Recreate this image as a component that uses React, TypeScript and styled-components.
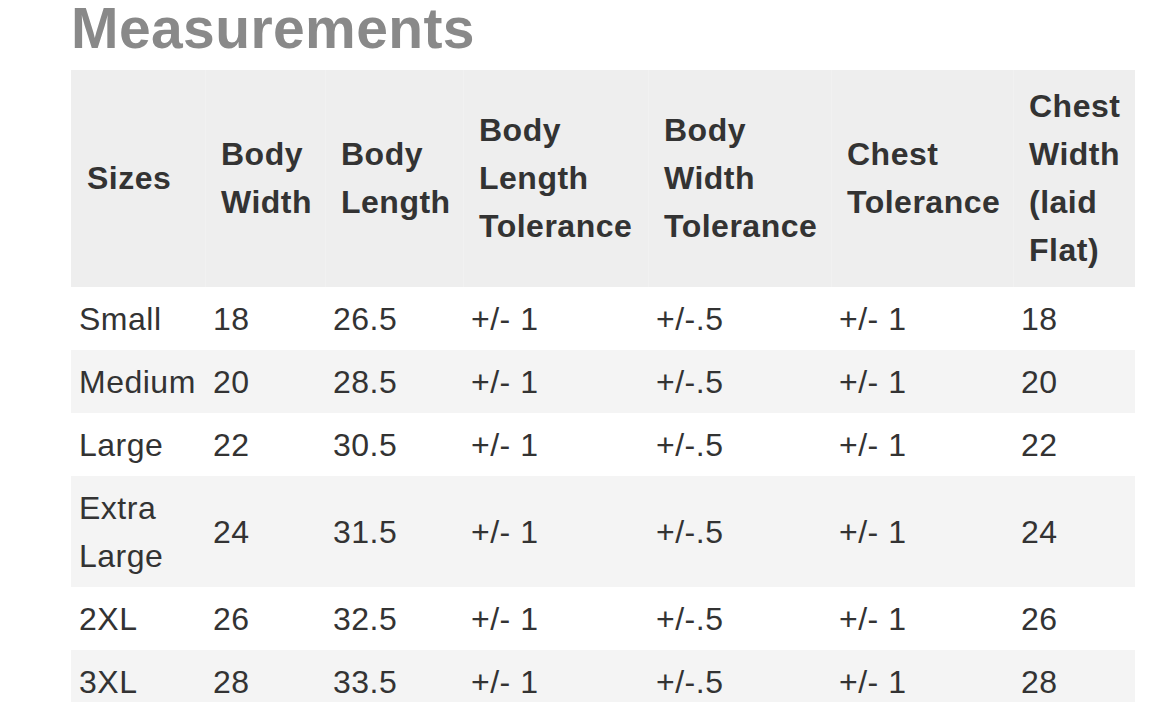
import React from "react"
import styled, { createGlobalStyle } from "styled-components"

const columns = [134, 120, 138, 185, 183, 182, 122]

const headings = [
  "Sizes",
  "Body Width",
  "Body Length",
  "Body Length Tolerance",
  "Body Width Tolerance",
  "Chest Tolerance",
  "Chest Width (laid Flat)",
]

const rows = [
  ["Small", "18", "26.5", "+/- 1", "+/-.5", "+/- 1", "18"],
  ["Medium", "20", "28.5", "+/- 1", "+/-.5", "+/- 1", "20"],
  ["Large", "22", "30.5", "+/- 1", "+/-.5", "+/- 1", "22"],
  ["Extra Large", "24", "31.5", "+/- 1", "+/-.5", "+/- 1", "24"],
  ["2XL", "26", "32.5", "+/- 1", "+/-.5", "+/- 1", "26"],
  ["3XL", "28", "33.5", "+/- 1", "+/-.5", "+/- 1", "28"],
]

export default function App() {
  return (
    <>
      <GlobalStyle />
      <Page>
        <Title>Measurements</Title>
        <SizeTable>
          <colgroup>
            {columns.map((w, i) => (
              <col key={i} width={w} />
            ))}
          </colgroup>
          <thead>
            <tr>
              {headings.map(h => (
                <HeadCell key={h}>{h}</HeadCell>
              ))}
            </tr>
          </thead>
          <tbody>
            {rows.map(row => (
              <Row key={row[0]}>
                {row.map((cell, i) => (
                  <Cell key={i}>{cell}</Cell>
                ))}
              </Row>
            ))}
          </tbody>
        </SizeTable>
      </Page>
    </>
  )
}

// --- styled components ---

const GlobalStyle = createGlobalStyle`
  html, body {
    margin: 0;
    background: #ffffff;
  }
  body {
    font-family: "Liberation Sans", Arial, sans-serif;
    color: #333333;
  }
`

const Page = styled.div`
  padding: 0 0 0 71px;
`

const Title = styled.h2`
  margin: 0 0 13px;
  font-size: 57px;
  line-height: 57px;
  font-weight: 700;
  color: #898989;
  letter-spacing: 0.4px;
`

const SizeTable = styled.table`
  width: 1064px;
  table-layout: fixed;
  border-collapse: collapse;
  border-spacing: 0;
  font-size: 32px;
  line-height: 48px;
  letter-spacing: 0.5px;
`

const HeadCell = styled.th`
  padding: 12px 8px 13px 16px;
  background: #eeeeee;
  text-align: left;
  vertical-align: middle;
  font-weight: 700;
  color: #333333;
  & + & {
    box-shadow: inset 1px 0 0 #f1f1f1;
  }
`

const Row = styled.tr`
  background: #ffffff;
  &:nth-child(even) {
    background: #f4f4f4;
  }
`

const Cell = styled.td`
  padding: 8px 4px 7px 8px;
  vertical-align: middle;
  color: #333333;
  font-weight: 400;
`
